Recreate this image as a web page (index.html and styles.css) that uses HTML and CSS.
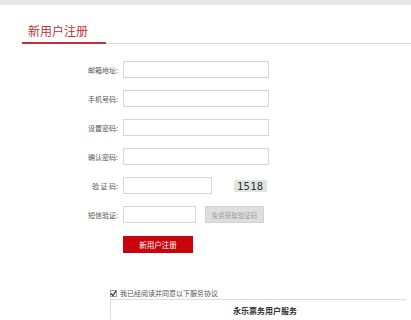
FILE: index.html
```html
<!DOCTYPE html>
<html lang="zh">
<head>
<meta charset="utf-8">
<link rel="stylesheet" href="styles.css">
</head>
<body>
<div class="topbar"></div>
<div class="header">
  <span class="title">新用户注册</span>
</div>
<form class="form">
  <div class="row"><label class="lbl">邮箱地址:</label><input class="inp" type="text"></div>
  <div class="row"><label class="lbl">手机号码:</label><input class="inp" type="text"></div>
  <div class="row"><label class="lbl">设置密码:</label><input class="inp" type="password"></div>
  <div class="row"><label class="lbl">确认密码:</label><input class="inp" type="password"></div>
  <div class="row"><label class="lbl">验 证 码:</label><input class="inp inp-code" type="text"><span class="captcha">1518</span></div>
  <div class="row"><label class="lbl">短信验证:</label><input class="inp inp-sms" type="text"><span class="smsbtn">免费获取验证码</span></div>
  <div class="row row-btn"><span class="submit">新用户注册</span></div>
</form>
<div class="agree">
  <label class="agree-line"><span class="chk"><svg width="7" height="7" viewBox="0 0 7 7"><path d="M1 3.5 L3 5.5 L6 1" stroke="#333" stroke-width="1.3" fill="none"/></svg></span>我已经阅读并同意以下服务协议</label>
  <div class="terms">
    <div class="terms-title">永乐票务用户服务</div>
  </div>
</div>
</body>
</html>
```
FILE: styles.css
```css
* { box-sizing: border-box; }
html, body { margin: 0; padding: 0; background: #fff; }
body { font-family: "Noto Sans CJK SC", "Noto Sans", sans-serif; color: #555; overflow: hidden; height: 320px; }
.topbar { height: 5px; background: #e8e8e8; }
.header { margin-left: 22px; margin-top: 19px; border-bottom: 1px solid #dcdcdc; height: 20px; display: flex; align-items: flex-end; }
.title { display: block; height: 20px; margin-bottom: -1px; padding: 1px 6px 0; font-size: 12px; line-height: 12px; color: #c0303a; border-bottom: 2px solid #c0303a; width: 84px; }
.form { margin-top: 17px; display: flex; flex-direction: column; gap: 12px; }
.row { display: flex; align-items: center; height: 17px; }
.lbl { width: 119px; padding-right: 1px; text-align: right; font-size: 7px; color: #555; white-space: pre; }
.inp { margin: 0 0 0 4px; width: 146px; height: 17px; border: 1px solid #d6d6d6; background: #fff; padding: 0; outline: none; }
.inp-code { width: 89px; }
.inp-sms { width: 73px; }
.captcha { margin-left: 22px; background: #dfe5df; color: #2b3440; font-family: "DejaVu Sans Mono", monospace; font-size: 10.5px; line-height: 12px; padding: 0 3px; letter-spacing: 0.3px; }
.smsbtn { margin-left: 9px; width: 59px; height: 17px; background: #dedede; border: 1px solid #d2d2d2; color: #a0a0a0; font-size: 6.5px; display: flex; align-items: center; justify-content: center; }
.row-btn { padding-left: 123px; margin-top: 1px; }
.submit { width: 70px; height: 17px; background: #c8040c; color: #fff; font-size: 7.5px; display: flex; align-items: center; justify-content: center; }
.agree { margin: 35px 0 0 110px; }
.agree-line { display: flex; align-items: center; font-size: 7px; color: #555; height: 10px; }
.chk { width: 7px; height: 7px; border: 1px solid #999; background: #fff; margin-right: 3px; display: flex; }
.chk svg { display: block; margin: -1px; }
.terms { margin-top: 1px; width: 296px; height: 20px; border-top: 1px solid #ddd; border-left: 1px solid #ddd; }
.terms-title { padding-top: 5px; padding-left: 122px; font-size: 8px; font-weight: bold; color: #333; }
```
